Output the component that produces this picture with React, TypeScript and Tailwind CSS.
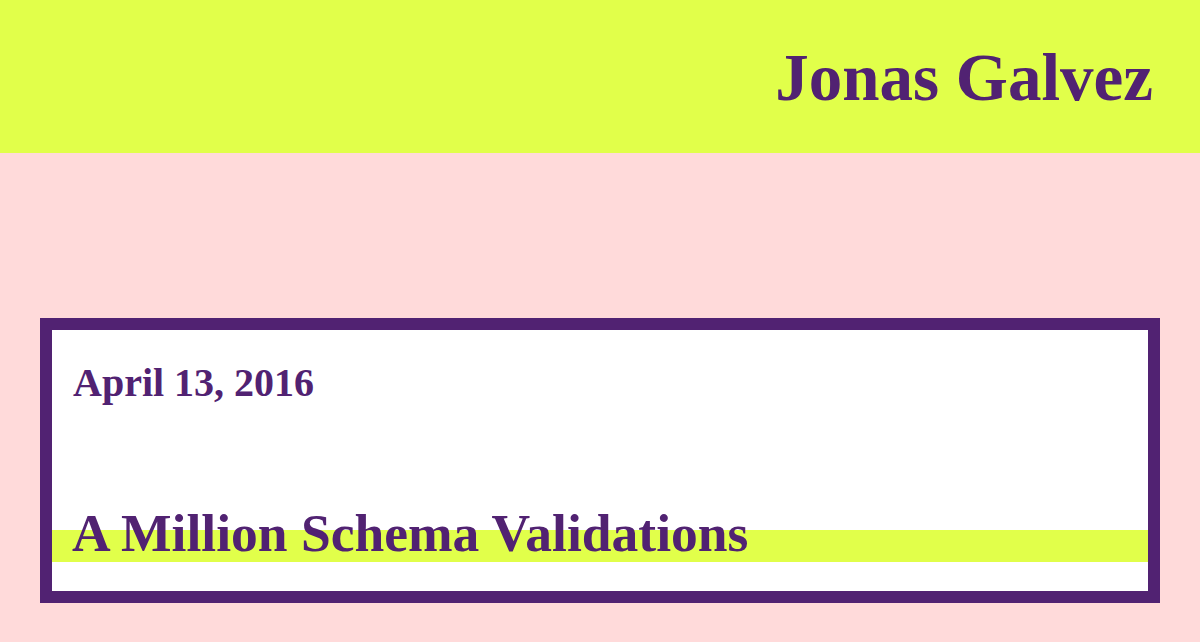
import React from 'react';

const serif = { fontFamily: '"Liberation Serif", "Times New Roman", serif' };

export default function App() {
  return (
    <div className="min-h-[642px] bg-[#ffdada] text-[#512272]" style={serif}>
      {/* Header */}
      <header className="h-[153px] bg-[#e1ff4a] flex items-center justify-end pr-[47px]">
        <h1 className="text-[67px] font-bold leading-none mt-[2px]">Jonas Galvez</h1>
      </header>

      {/* Post card */}
      <main className="px-10 pt-[165px] pb-[39px]">
        <article className="border-[12px] border-[#512272] bg-white h-[285px] flex flex-col">
          <p className="pl-[21px] pt-[33px] text-[40px] font-bold leading-none">April 13, 2016</p>
          <div className="relative mt-auto mb-[29px]">
            <div className="absolute left-0 right-0 bottom-0 h-[32px] bg-[#e1ff4a]" />
            <h2 className="relative pl-[20px] text-[53.5px] font-bold leading-none pb-[2px]">
              A Million Schema Validations
            </h2>
          </div>
        </article>
      </main>
    </div>
  );
}
